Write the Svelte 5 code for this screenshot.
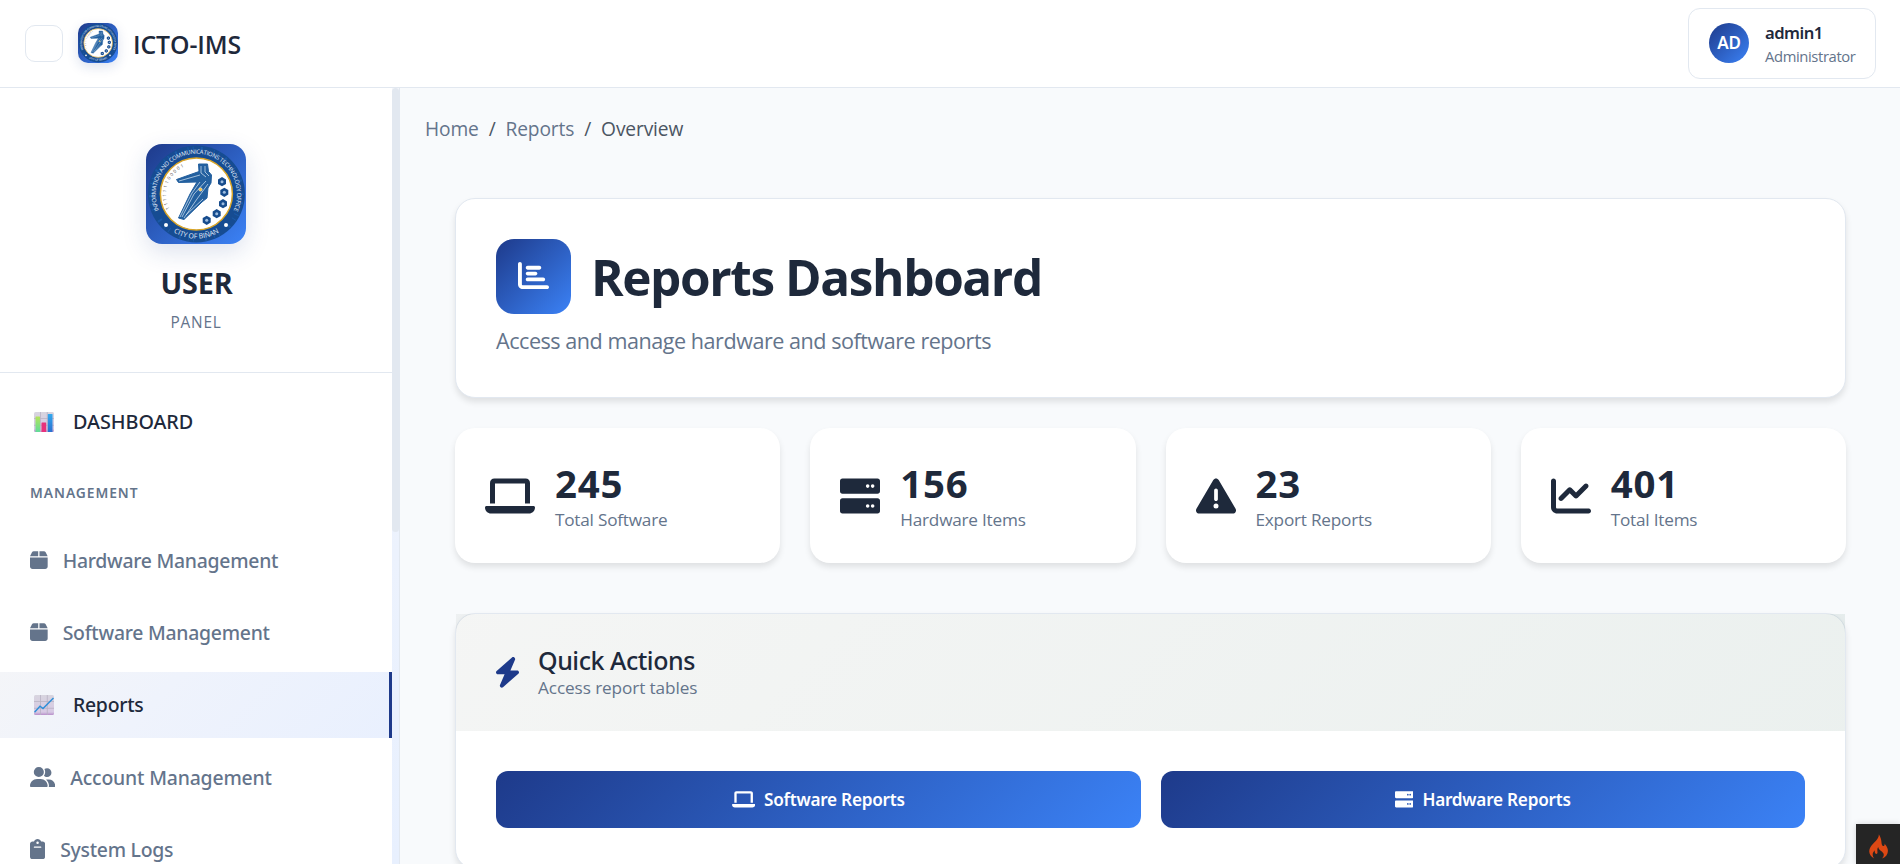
<script>
  const icons = {
    laptop: [640, 'M120 32C87 32 64 55 64 88V352h64V96H512V352h64V88c0-33-23-56-56-56H120zM19.2 384C8.6 384 0 392.6 0 403.2C0 445.6 34.4 480 76.8 480H563.2c42.4 0 76.8-34.4 76.8-76.8c0-10.6-8.6-19.2-19.2-19.2H19.2z'],
    server: [512, 'M32 32C12 32 0 44 0 64V194c0 20 12 32 32 32H480c20 0 32-12 32-32V64c0-20-12-32-32-32H32zm322 74a23 23 0 1 1 0 46 23 23 0 1 1 0-46zm64 0a23 23 0 1 1 0 46 23 23 0 1 1 0-46zM32 286c-20 0-32 12-32 32V448c0 20 12 32 32 32H480c20 0 32-12 32-32V318c0-20-12-32-32-32H32zm322 74a23 23 0 1 1 0 46 23 23 0 1 1 0-46zm64 0a23 23 0 1 1 0 46 23 23 0 1 1 0-46z'],
    warning: [512, 'M256 32c14.2 0 27.3 7.5 34.5 19.8l216 368c7.3 12.4 7.3 27.7 .2 40.1S486.3 480 472 480H40c-14.3 0-27.6-7.7-34.7-20.1s-7-27.8 .2-40.1l216-368C228.7 39.5 241.8 32 256 32zm0 128c-13.3 0-24 10.7-24 24V296c0 13.3 10.7 24 24 24s24-10.7 24-24V184c0-13.3-10.7-24-24-24zm32 224a32 32 0 1 0 -64 0 32 32 0 1 0 64 0z'],
    line: [512, 'M64 64c0-17.7-14.3-32-32-32S0 46.3 0 64V400c0 44.2 35.8 80 80 80H480c17.7 0 32-14.3 32-32s-14.3-32-32-32H80c-8.8 0-16-7.2-16-16V64zm406.6 86.6c12.5-12.5 12.5-32.8 0-45.3s-32.8-12.5-45.3 0L320 210.7l-57.4-57.4c-12.5-12.5-32.8-12.5-45.3 0l-112 112c-12.5 12.5-12.5 32.8 0 45.3s32.8 12.5 45.3 0L240 221.3l57.4 57.4c12.5 12.5 32.8 12.5 45.3 0l128-128z'],
    bar: [512, 'M32 32c17.7 0 32 14.3 32 32V400c0 8.8 7.2 16 16 16H480c17.7 0 32 14.3 32 32s-14.3 32-32 32H80c-44.2 0-80-35.8-80-80V64C0 46.3 14.3 32 32 32zm96 96c0-17.7 14.3-32 32-32l192 0c17.7 0 32 14.3 32 32s-14.3 32-32 32H160c-17.7 0-32-14.3-32-32zm32 64H288c17.7 0 32 14.3 32 32s-14.3 32-32 32H160c-17.7 0-32-14.3-32-32s14.3-32 32-32zm0 96H416c17.7 0 32 14.3 32 32s-14.3 32-32 32H160c-17.7 0-32-14.3-32-32s14.3-32 32-32z'],
    box: [448, 'M50.7 58.5L0 160H208V32H93.7C75.5 32 58.9 42.3 50.7 58.5zM240 160H448L397.3 58.5C389.1 42.3 372.5 32 354.3 32H240V160zm208 32H0V416c0 35.3 28.7 64 64 64H384c35.3 0 64-28.7 64-64V192z'],
    users: [640, 'M96 128a128 128 0 1 1 256 0A128 128 0 1 1 96 128zM0 482.3C0 383.8 79.8 304 178.3 304h91.4C368.2 304 448 383.8 448 482.3c0 16.4-13.3 29.7-29.7 29.7H29.7C13.3 512 0 498.7 0 482.3zM609.3 512H471.4c5.4-9.4 8.6-20.3 8.6-32v-8c0-60.7-27.1-115.2-69.8-151.8c2.4-.1 4.7-.2 7.1-.2h61.4C567.8 320 640 392.2 640 481.3c0 17-13.8 30.7-30.7 30.7zM432 256c-31 0-59-12.6-79.3-32.9C372.4 196.5 384 163.6 384 128c0-26.8-6.6-52.1-18.3-74.3C384.3 40.1 407.2 32 432 32c61.9 0 112 50.1 112 112s-50.1 112-112 112z'],
    clipboard: [384, 'M192 0c-41.8 0-77.4 26.7-90.5 64H64C28.7 64 0 92.7 0 128V448c0 35.3 28.7 64 64 64H320c35.3 0 64-28.7 64-64V128c0-35.3-28.7-64-64-64H282.5C269.4 26.7 233.8 0 192 0zm0 64a32 32 0 1 1 0 64 32 32 0 1 1 0-64zM112 192H272c8.8 0 16 7.2 16 16s-7.2 16-16 16H112c-8.8 0-16-7.2-16-16s7.2-16 16-16z']
  };

  const stats = [
    { icon: 'laptop', value: '245', label: 'Total Software' },
    { icon: 'server', value: '156', label: 'Hardware Items' },
    { icon: 'warning', value: '23', label: 'Export Reports' },
    { icon: 'line', value: '401', label: 'Total Items' }
  ];

  const management = [
    { icon: 'box', label: 'Hardware Management' },
    { icon: 'box', label: 'Software Management' },
    { emoji: 'trend', label: 'Reports', active: true },
    { icon: 'users', label: 'Account Management' },
    { icon: 'clipboard', label: 'System Logs' }
  ];

  const badges = [[76, 37.7], [78.3, 48.3], [77, 59.7], [70.7, 69.7], [60.7, 76.3]];
</script>

{#snippet icon(name, size)}
  <svg class="icon" width={(size * icons[name][0]) / 512} height={size} viewBox="0 0 {icons[name][0]} 512" fill="currentColor">
    <path d={icons[name][1]} />
  </svg>
{/snippet}

{#snippet seal(id)}
  <svg class="seal" viewBox="0 0 100 100">
    <defs>
      <path id="{id}-top" d="M14.6 69.5A40.6 40.6 0 1 1 86.2 69.5" />
      <path id="{id}-bottom" d="M20 82.5A44.4 44.4 0 0 0 80.8 82.5" />
      <path id="{id}-bits" d="M23.5 65A30.8 30.8 0 0 1 42 21.2" />
    </defs>
    <circle cx="50.4" cy="50" r="48.5" fill="#164c92" />
    <circle cx="50.4" cy="50" r="45" fill="none" stroke="#1f6bc4" stroke-width="5" stroke-dasharray="1 7 2 11 1 4" opacity=".45" />
    <circle cx="50.4" cy="50" r="36" fill="#fff" stroke="#d9a528" stroke-width="1.5" />
    <g fill="#e6f0fb">
      <text font-size="5.9" letter-spacing="-.24"><textPath href="#{id}-top" startOffset="50%" text-anchor="middle">INFORMATION AND COMMUNICATIONS TECHNOLOGY OFFICE</textPath></text>
      <text font-size="6.9"><textPath href="#{id}-bottom" startOffset="50%" text-anchor="middle">CITY OF BIÑAN</textPath></text>
    </g>
    <text font-size="4.6" fill="#555" letter-spacing="1.65"><textPath href="#{id}-bits">111111100001</textPath></text>
    <circle cx="20" cy="81" r="2" fill="#fff" /><circle cx="80" cy="81" r="2" fill="#fff" />
    <path d="M30.5 35.5L53 27.5L52.5 20L61.5 20L62.5 27.5L65.5 31L65 39L62 44L61 54L56 58L38 75.5L32.5 74L44 50L51 38L32.5 38.5Z" fill="#23609f" stroke="#23609f" stroke-linejoin="round" />
    <path d="M33 37L54 31M55 22V29L60 33M59 22V28L63 32M36 73L48 50L60 37M38 74L51 55L62 40M34 73L46 49L54 38M40 71L57 55" fill="none" stroke="#dcebf7" stroke-width=".7" />
    <circle cx="54.5" cy="45.5" r="1.7" fill="#f0bd3c" stroke="#fff" stroke-width=".5" />
    {#each badges as [x, y]}
      <path d="M{x} {y - 4.6}l4 2.3v4.6l-4 2.3l-4-2.3v-4.6z" fill="#174c8d" />
      <circle cx={x} cy={y} r="1.5" fill="#9dbde0" />
    {/each}
  </svg>
{/snippet}

{#snippet emoji(kind)}
  <svg class="emoji" viewBox="0 0 20 20">
    <defs>
      <linearGradient id="paper-{kind}" x1="0" y1="0" x2="0" y2="1"><stop offset="0" stop-color="#d8d5df" /><stop offset=".85" stop-color="#d7c9e4" /><stop offset="1" stop-color="#b88fca" /></linearGradient>
      <linearGradient id="green-{kind}" x1="0" y1="0" x2="0" y2="1"><stop offset="0" stop-color="#b4e45a" /><stop offset="1" stop-color="#5fdc9a" /></linearGradient>
      <linearGradient id="blue-{kind}" x1="0" y1="0" x2="0" y2="1"><stop offset="0" stop-color="#33a9ee" /><stop offset="1" stop-color="#2b6fd0" /></linearGradient>
    </defs>
    <rect width="20" height="20" rx="1.5" fill="url(#paper-{kind})" />
    <path d="M0 6.5H20M0 13.3H20M6.5 0V20M13.3 0V20" stroke="#b9b2c4" stroke-width=".8" />
    {#if kind === 'bars'}
      <rect x="1.5" y="4.5" width="4.5" height="15.5" rx=".5" fill="url(#green-{kind})" />
      <rect x="7.5" y="10.5" width="4.7" height="9.5" rx=".5" fill="#e8327c" />
      <rect x="13.8" y="2" width="4.7" height="18" rx=".5" fill="url(#blue-{kind})" />
    {:else}
      <path d="M.5 17.3L6 11.2L9 13.5L19.5 3" fill="none" stroke="#2f8fd8" stroke-width="1.5" />
    {/if}
  </svg>
{/snippet}

<div class="app">
  <header class="topbar">
    <div class="brand">
      <button class="toggle" aria-label="Menu"></button>
      <div class="logo small">{@render seal('s')}</div>
      <span class="name">ICTO-IMS</span>
    </div>
    <div class="account">
      <div class="avatar">AD</div>
      <div class="who">
        <div class="login">admin1</div>
        <div class="role">Administrator</div>
      </div>
    </div>
  </header>

  <div class="shell">
    <aside class="sidebar">
      <div class="side">
        <div class="panel">
          <div class="logo">{@render seal('l')}</div>
          <div class="user">USER</div>
          <div class="sub">PANEL</div>
        </div>
        <nav>
          <a class="row dash" href="#dashboard"><span class="slot">{@render emoji('bars')}</span>DASHBOARD</a>
          <div class="section">MANAGEMENT</div>
          <div class="list">
            {#each management as item}
              <a class="row" class:active={item.active} href="#{item.label}">
                {#if item.emoji}<span class="slot">{@render emoji(item.emoji)}</span>{:else}{@render icon(item.icon, 20.2)}{/if}{item.label}
              </a>
            {/each}
          </div>
        </nav>
      </div>
      <div class="track"><div class="thumb"></div></div>
    </aside>

    <main>
      <div class="crumbs"><a href="#home">Home</a><span>/</span><a href="#reports">Reports</a><span>/</span><span>Overview</span></div>
      <div class="content">
        <section class="card hero">
          <div class="heading">
            <div class="tile">{@render icon('bar', 31)}</div>
            <h1>Reports Dashboard</h1>
          </div>
          <p>Access and manage hardware and software reports</p>
        </section>

        <section class="stats">
          {#each stats as s}
            <div class="stat">
              {@render icon(s.icon, 40)}
              <div class="figures">
                <div class="value">{s.value}</div>
                <div class="label">{s.label}</div>
              </div>
            </div>
          {/each}
        </section>

        <section class="card quick">
          <div class="quick-head">
            <svg class="icon" width="23" height="30.7" viewBox="32 0 384 512" fill="#1e3a8a"><path d="M349.4 44.6c5.9-13.7 1.5-29.7-10.6-38.5s-28.6-8-39.9 1.8l-256 224c-10 8.8-13.6 22.9-8.9 35.3S50.7 288 64 288H175.5L98.6 467.4c-5.9 13.7-1.5 29.7 10.6 38.5s28.6 8 39.9-1.8l256-224c10-8.8 13.6-22.9 8.9-35.3s-16.6-20.7-30-20.7H272.5L349.4 44.6z" /></svg>
            <div class="quick-text">
              <h2>Quick Actions</h2>
              <div class="hint">Access report tables</div>
            </div>
          </div>
          <div class="actions">
            <button class="action">{@render icon('laptop', 18.6)}Software Reports</button>
            <button class="action">{@render icon('server', 18.6)}Hardware Reports</button>
          </div>
        </section>
      </div>
    </main>
  </div>

  <div class="debug">
    <svg width="19" height="25" viewBox="0 0 58 75" fill="#dd4814"><path d="M30 0C31 16 14 24 5 38C-3 51 0 66 16 74C8 63 11 55 18 49C16 57 20 61 24 60C29 57 22 48 28 39C29 51 46 53 45 63C45 68 43 71 40 74C55 68 61 55 56 42C54 36 50 32 47 28C49 34 46 37 43 36C35 33 42 18 30 0Z" /></svg>
  </div>
</div>

<style>
  :global(body) { margin: 0; overflow: hidden; }
  .app { position: relative; height: 864px; overflow: hidden; display: flex; flex-direction: column; background: #f8fafc; color: #1e293b; font-family: "Open Sans", "Noto Sans", sans-serif; }
  .app * { box-sizing: border-box; }
  a { color: inherit; text-decoration: none; }
  .icon { flex: none; display: block; }

  .topbar { flex: none; height: 88px; padding: 0 24px 1px 25px; border-bottom: 1px solid #e2e8f0; background: #fff; display: flex; align-items: center; justify-content: space-between; }
  .brand { display: flex; align-items: center; gap: 15px; }
  .toggle { width: 38px; height: 37px; padding: 0; border: 1px solid #e2e8f0; border-radius: 10px; background: #fff; }
  .logo { width: 100px; height: 100px; border-radius: 16px; background: linear-gradient(135deg, #1e3a8a, #3b82f6); box-shadow: 0 8px 24px rgba(30, 58, 138, .15); overflow: hidden; }
  .logo.small { width: 40px; height: 40px; border-radius: 10px; box-shadow: 0 4px 12px rgba(30, 58, 138, .15); }
  .seal { display: block; width: 100%; height: 100%; font-family: "Open Sans", sans-serif; }
  .name { padding-top: 1px; font-size: 24.8px; font-weight: 600; line-height: 32px; letter-spacing: -.1px; }
  .account { display: flex; align-items: center; gap: 16px; width: 188px; height: 71px; padding: 0 18px 0 20px; border: 1px solid #e2e8f0; border-radius: 12px; }
  .avatar { width: 40px; height: 40px; border-radius: 50%; background: linear-gradient(135deg, #1e3a8a, #3b82f6); color: #fff; display: flex; align-items: center; justify-content: center; font: 600 17px/40px "Noto Sans", sans-serif; letter-spacing: -.3px; }
  .login { font: 600 16.6px/24px "Noto Sans", sans-serif; letter-spacing: -.5px; }
  .role { margin-top: 1px; font-size: 14.8px; line-height: 20px; letter-spacing: -.38px; color: #64748b; }

  .shell { flex: 1; min-height: 0; display: flex; }
  .sidebar { flex: none; width: 400px; display: flex; background: #fff; border-right: 1px solid #e2e8f0; }
  .side { width: 392px; overflow: hidden; }
  .track { width: 7px; background: linear-gradient(#f5f6fa, #ecf2fd 60%, #e8f0fe); }
  .thumb { height: 444px; border-radius: 4px; background: #e2e8f0; }
  .panel { height: 285px; padding-top: 56px; border-bottom: 1px solid #e2e8f0; display: flex; flex-direction: column; align-items: center; }
  .user { margin-top: 21px; padding-left: 1px; font-size: 28.8px; font-weight: 700; line-height: 36px; letter-spacing: -.2px; }
  .sub { margin-top: 10px; font-size: 15.4px; line-height: 24px; letter-spacing: .8px; color: #64748b; }
  nav { padding-top: 16px; font-family: "Noto Sans", sans-serif; }
  .row { height: 66px; padding: 0 0 1px 30px; display: flex; align-items: center; gap: 15px; font-size: 19.4px; font-weight: 500; letter-spacing: -.26px; color: #64748b; }
  .row:nth-child(4) { margin-top: .7px; letter-spacing: -.18px; }
  .dash { padding-bottom: 1px; font-size: 19.8px; letter-spacing: -.05px; color: #1e293b; }
  .slot { width: 28px; display: flex; justify-content: center; }
  .emoji { width: 20px; height: 20px; }
  .section { height: 73px; padding-left: 30px; font-size: 13.8px; font-weight: 600; line-height: 75px; letter-spacing: .95px; color: #64748b; }
  .list { display: flex; flex-direction: column; gap: 6px; }
  .active { background: linear-gradient(135deg, #f4f5f8, #eff3fc 40%, #e9f0fe); border-right: 3px solid #1e3a8a; color: #1e293b; }

  main { flex: 1; min-width: 0; padding: 27px 24px 0 25px; }
  .crumbs { display: flex; gap: 10px; font-size: 19.2px; line-height: 28px; letter-spacing: -.15px; color: #4b5563; }
  .crumbs a { color: #64748b; }
  .content { margin: 55px 30px 0; }
  .card { border: 1px solid #e2e8f0; border-radius: 20px; background: #fff; box-shadow: 0 4px 6px rgba(0, 0, 0, .1); }
  .hero { padding: 40px; height: 200px; }
  .heading { display: flex; align-items: center; gap: 20px; }
  .tile { width: 75px; height: 75px; padding-bottom: 2px; border-radius: 18px; background: linear-gradient(135deg, #1e3a8a, #3b82f6); color: #fff; display: flex; align-items: center; justify-content: center; }
  h1 { margin: 0; font-size: 49.5px; font-weight: 700; line-height: 70px; letter-spacing: -1.4px; }
  .hero p { margin: 11px 0 0; font-size: 21.6px; line-height: 32px; letter-spacing: -.48px; color: #64748b; }
  .stats { margin-top: 30px; display: grid; grid-template-columns: repeat(4, 1fr); gap: 30px; }
  .stat { height: 135px; padding: 1px 30px 0; display: flex; align-items: center; gap: 20px; border-radius: 20px; background: #fff; box-shadow: 0 4px 6px rgba(0, 0, 0, .1); }
  .figures { padding-top: 2px; }
  .value { font-size: 38.4px; font-weight: 700; line-height: 40px; letter-spacing: .8px; }
  .label { margin-top: 5px; font-size: 17.2px; line-height: 24px; letter-spacing: -.22px; color: #64748b; }
  .quick { margin-top: 50px; height: 256px; }
  .quick-head { height: 117px; padding: 0 40px; display: flex; align-items: center; gap: 19px; background: linear-gradient(135deg, rgba(10, 30, 10, .045), rgba(25, 85, 65, .088)); }
  .quick-text { padding-bottom: 2px; }
  h2 { margin: 0; font: 500 25px/32px "Noto Sans", sans-serif; letter-spacing: -.46px; }
  .hint { font-size: 17.2px; line-height: 24px; letter-spacing: -.1px; color: #64748b; }
  .actions { padding: 40px; display: grid; grid-template-columns: 1fr 1fr; gap: 20px; }
  .action { height: 57px; padding: 0; border: 0; border-radius: 12px; background: linear-gradient(135deg, #1e3a8a, #3b82f6); color: #fff; display: flex; align-items: center; justify-content: center; gap: 9px; font: 600 17.2px "Noto Sans", sans-serif; letter-spacing: -.25px; }
  .debug { position: absolute; right: 0; bottom: 0; width: 44px; height: 40px; padding: 10px 0 0 13px; background: #252525; box-shadow: 0 0 6px rgba(0, 0, 0, .15); }
</style>
